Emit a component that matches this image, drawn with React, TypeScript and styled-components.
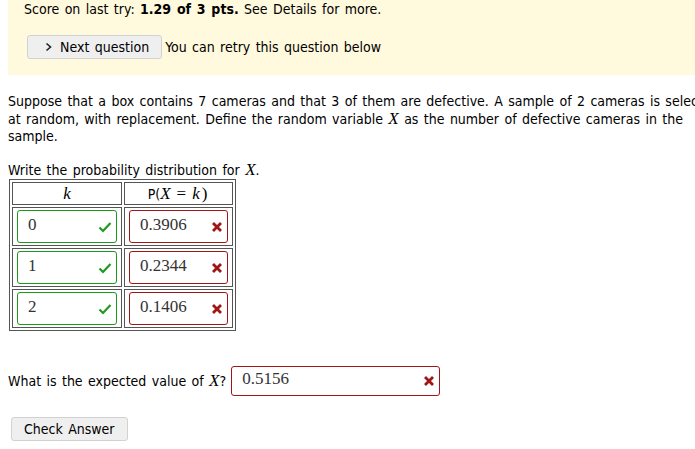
import React from "react";
import styled, { createGlobalStyle } from "styled-components";

const Global = createGlobalStyle`
  html { overflow: hidden; }
  body {
    margin: 0;
    font-family: "DejaVu Sans Condensed", "DejaVu Sans", sans-serif;
    font-size: 14px;
    word-spacing: 1.4px;
    color: #000;
    background: #fff;
  }
`;

const Page = styled.div`
  width: 722px;
  padding: 0 8px 8px 8px;
`;

const Banner = styled.div`
  box-sizing: border-box;
  height: 75px;
  background: #fff9dd;
  padding: 1px 16px 0 16px;
`;

const ScoreLine = styled.div`
  line-height: 17px;
`;

const ActionRow = styled.div`
  display: flex;
  align-items: center;
  gap: 3px;
  margin-top: 17px;
  margin-left: 3px;
`;

const GreyButton = styled.button`
  display: inline-flex;
  align-items: center;
  gap: 7px;
  font-family: inherit;
  font-size: 14px;
  word-spacing: 1.4px;
  color: #000;
  background: #efefef;
  border: 1px solid #d2d2d2;
  border-radius: 3px;
  height: 24px;
  padding: 0 12px 0 16px;
`;

const Question = styled.p`
  margin: 18px 0 0 0;
  line-height: 17px;
`;

const MathVar = styled.span`
  font-family: "Liberation Serif", "DejaVu Serif", serif;
  font-style: italic;
  font-size: 17px;
`;

const MathOp = styled.span`
  font-family: "Liberation Serif", "DejaVu Serif", serif;
  font-size: 17px;
  padding: 0 2px;
`;

const Prompt = styled.div`
  margin-top: 16px;
  line-height: 17px;
`;

const Grid = styled.table`
  border: 1px solid #555;
  border-spacing: 2px;
  margin-left: 1px;
`;

const HeadCell = styled.th<{ $w: number }>`
  border: 1px solid #555;
  width: ${(p) => p.$w}px;
  height: 21px;
  padding: 0;
  font-weight: normal;
  text-align: center;
  word-spacing: 0;
`;

const Cell = styled.td`
  border: 1px solid #555;
  padding: 2px 4px;
  height: 33px;
`;

const Field = styled.div<{ $ok: boolean; $w: number; $h: number }>`
  display: flex;
  align-items: center;
  justify-content: space-between;
  box-sizing: border-box;
  width: ${(p) => p.$w}px;
  height: ${(p) => p.$h}px;
  border: 1px solid ${(p) => (p.$ok ? "#1a9a1a" : "#a01515")};
  border-radius: 3px;
  padding: 0 4px 0 10px;
  background: #fff;
`;

const FieldValue = styled.span`
  font-family: "Liberation Serif", "DejaVu Serif", serif;
  font-size: 17px;
  color: #333;
  margin-top: -4px;
`;

const ExpectedRow = styled.div`
  display: flex;
  align-items: center;
  gap: 5px;
  margin-top: 35px;
`;

const CheckButton = styled(GreyButton)`
  margin-top: 21px;
  margin-left: 3px;
  padding: 0 12px;
  height: 24px;
  display: flex;
`;

const Chevron = () => (
  <svg width="9" height="10" viewBox="0 0 9 10">
    <path d="M2.5 1.5 L6.5 5 L2.5 8.5" fill="none" stroke="#222" strokeWidth="1.6" />
  </svg>
);

const Check = () => (
  <svg width="14" height="12" viewBox="0 0 14 12">
    <path d="M1.5 6.5 L5 10 L12.5 2" fill="none" stroke="#1f9a1f" strokeWidth="2.2" />
  </svg>
);

const Cross = () => (
  <svg width="12" height="12" viewBox="0 0 12 12">
    <path d="M2 2 L10 10 M10 2 L2 10" stroke="#a01515" strokeWidth="2.8" />
  </svg>
);

const rows = [
  ["0", "0.3906"],
  ["1", "0.2344"],
  ["2", "0.1406"],
];

export default function App() {
  return (
    <Page>
      <Global />
      <Banner>
        <ScoreLine>
          Score on last try: <b>1.29 of 3 pts.</b> See Details for more.
        </ScoreLine>
        <ActionRow>
          <GreyButton>
            <Chevron />
            Next question
          </GreyButton>
          <span>You can retry this question below</span>
        </ActionRow>
      </Banner>
      <Question>
        Suppose that a box contains 7 cameras and that 3 of them are defective. A sample of 2
        cameras is selected at random, with replacement. Define the random variable{" "}
        <MathVar>X</MathVar> as the number of defective cameras in the sample.
      </Question>
      <Prompt>
        Write the probability distribution for <MathVar>X</MathVar>.
      </Prompt>
      <Grid>
        <thead>
          <tr>
            <HeadCell $w={107}>
              <MathVar>k</MathVar>
            </HeadCell>
            <HeadCell $w={107}>
              P(<MathVar>X</MathVar> <MathOp>=</MathOp> <MathVar>k</MathVar>
              <MathOp>)</MathOp>
            </HeadCell>
          </tr>
        </thead>
        <tbody>
          {rows.map(([k, p]) => (
            <tr key={k}>
              <Cell>
                <Field $ok $w={100} $h={33}>
                  <FieldValue>{k}</FieldValue>
                  <Check />
                </Field>
              </Cell>
              <Cell>
                <Field $ok={false} $w={99} $h={33}>
                  <FieldValue>{p}</FieldValue>
                  <Cross />
                </Field>
              </Cell>
            </tr>
          ))}
        </tbody>
      </Grid>
      <ExpectedRow>
        <span>
          What is the expected value of <MathVar>X</MathVar>?
        </span>
        <Field $ok={false} $w={209} $h={30}>
          <FieldValue>0.5156</FieldValue>
          <Cross />
        </Field>
      </ExpectedRow>
      <CheckButton>Check Answer</CheckButton>
    </Page>
  );
}
